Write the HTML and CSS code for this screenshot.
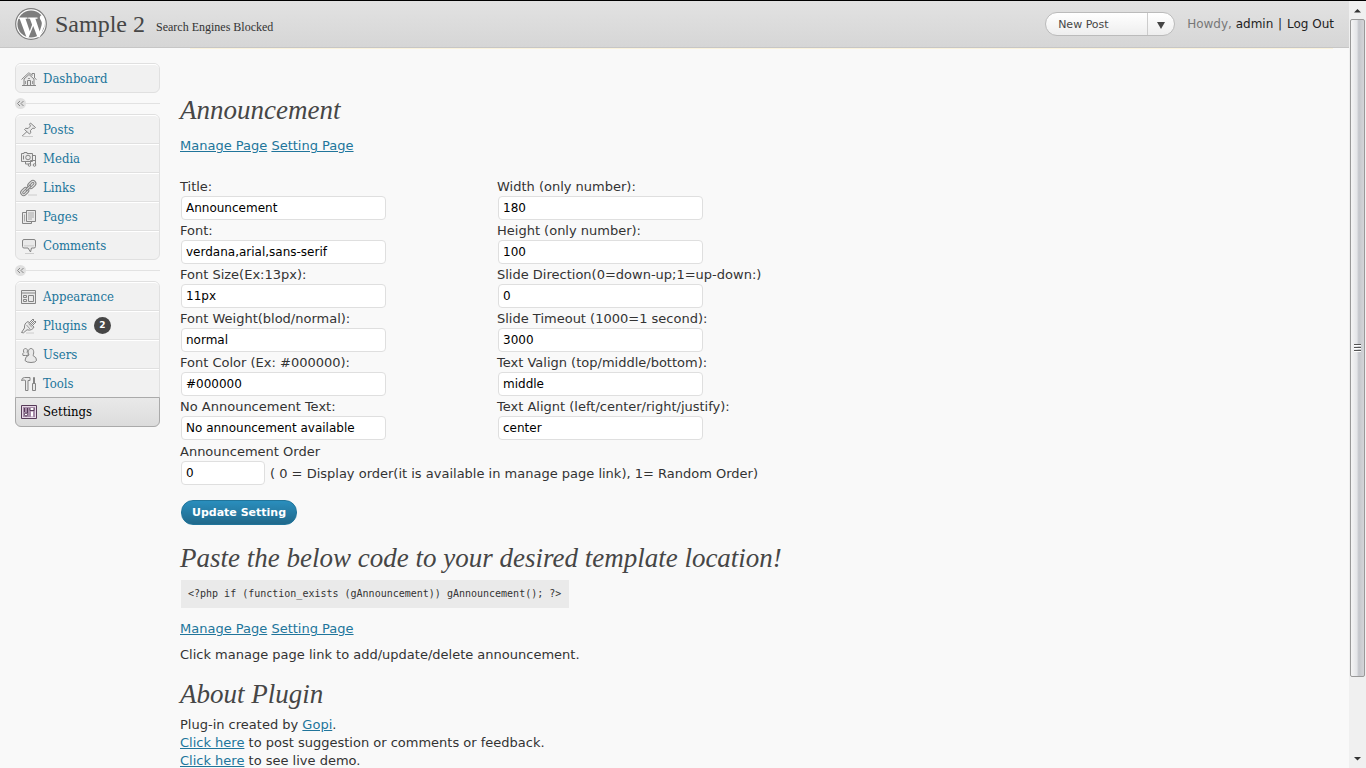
FILE: index.html
```html
<!DOCTYPE html>
<html lang="en">
<head>
<meta charset="utf-8">
<title>Announcement</title>
<link rel="stylesheet" href="styles.css">
</head>
<body>
<div class="page">
  <header class="top">
    <svg class="logo" viewBox="0 0 32 32" aria-hidden="true">
      <circle cx="16" cy="16" r="15.300" fill="#fff" stroke="#7d7d7d" stroke-width="1.200"/>
      <circle cx="16" cy="16" r="13.600" fill="#7d7d7d"/>
      <path fill="#fff" d="M3 9.500h9.500v1.300h-2l4.300 12.500 2.300-6.600-2.200-5.900h-1.700V9.500h9.300v1.300h-2.100l4.300 12.600 1.800-5.800c.9-3-.2-4.300-1.100-6-1.200-2.300-.3-4.300 1.900-4.300 1.800 2.200 2.800 5 2.600 8.300-.2 2.800-1.600 4.800-2.400 7l-2.800 6.700h-2.200l-4.300-11.300-4.500 11.300h-2.200L4.700 10.800H3z"/>
    </svg>
    <h1 class="site">Sample 2</h1>
    <a class="privacy" href="#">Search Engines Blocked</a>
    <div class="favorite">
      <button class="fav-main" type="button">New Post</button>
      <button class="fav-toggle" type="button" aria-label="More actions"><svg viewBox="0 0 8 7" width="8" height="7"><path d="M0 0h8L4 7z" fill="#444"/></svg></button>
    </div>
    <p class="user">Howdy, <a href="#">admin</a> <span>|</span> <a href="#">Log Out</a></p>
  </header>
  <div class="strip"></div>
  <div class="body">
    <nav class="menu" aria-label="Admin menu">
      <ul class="group">
        <li><a href="#"><svg class="icon" viewBox="0 0 16 16"><path class="fill" d="M3 8v6.500h10V8L8 3.500z"/><path d="M.5 8.500 7.500 2h1L11 4.500v-2h2.500V7l2 1.500M1 14.500h14M6.500 14.500v-5h3v5"/><path d="M7 7.500h2M4.500 10v3M11.500 10v3" stroke="#999"/></svg>Dashboard</a></li>
      </ul>
      <button class="fold" type="button" aria-label="Collapse menu"><svg viewBox="0 0 11 11"><circle cx="5.500" cy="5.500" r="5.500" fill="#e0e0e0"/><path d="M5 3 2.500 5.500 5 8M8.500 3 6 5.500 8.500 8" fill="none" stroke="#888"/></svg></button>
      <ul class="group">
        <li><a href="#"><svg class="icon" viewBox="0 0 16 16"><path d="M2 14.500h10" stroke="#ccc"/><path class="fill" d="m9.500 1 5 4.500-1.200 1-1.500-.4-2.300 2.400.2 2.300-1.200 1.200-5-4.500 1.200-1.200 2.400.2L9.500 4l-1-1.800z"/><path d="M6 9.500 1 14.200"/></svg>Posts</a></li>
        <li><a href="#"><svg class="icon" viewBox="0 0 16 16"><path class="fill" d="M.5 2.500H3v-1h3v1h5.500v8H.5z"/><circle class="fill" cx="7" cy="6.500" r="2.300"/><path d="M2.500 4.500v4M4.500 10.500v2.500h4M12 4.500h2.500v9M9.500 14V9.500h5"/><circle class="fill" cx="8.500" cy="14" r="1.300"/><circle class="fill" cx="13.500" cy="14" r="1.300"/></svg>Media</a></li>
        <li><a href="#"><svg class="icon" viewBox="0 0 16 16"><path d="M7 15h9" stroke="#ccc"/><g transform="rotate(-45 8 8)"><rect class="fill" x="-2" y="4.500" width="9" height="6" rx="3"/><rect class="fill" x="8" y="4.500" width="9" height="6" rx="3"/><rect x="0" y="6.500" width="5" height="2" rx="1"/><rect x="10" y="6.500" width="5" height="2" rx="1"/><path class="fill" d="M4.500 6.500h6v2h-6z"/></g></svg>Links</a></li>
        <li><a href="#"><svg class="icon" viewBox="0 0 16 16"><path class="fill" d="M5 3.500H1.500v11h9V13"/><path class="fill" d="M5.500 1.500h9v11h-9z"/><path d="M7 4h6M7 6h6M7 8h6M7 10h4M3.500 5.500v7" stroke="#aaa"/></svg>Pages</a></li>
        <li><a href="#"><svg class="icon" viewBox="0 0 16 16"><path d="M4 15.500h9" stroke="#ccc"/><path class="fill" d="M3 1.500h10q1.500 0 1.500 1.500v5.500Q14.500 10 13 10h-2.500l-1 4L7 10H3Q1.500 10 1.500 8.500V3q0-1.500 1.500-1.500z"/><path d="M3 7h10v1.500H3z" fill="#d4d4d4" stroke="none"/></svg>Comments</a></li>
      </ul>
      <button class="fold" type="button" aria-label="Collapse menu"><svg viewBox="0 0 11 11"><circle cx="5.500" cy="5.500" r="5.500" fill="#e0e0e0"/><path d="M5 3 2.500 5.500 5 8M8.500 3 6 5.500 8.500 8" fill="none" stroke="#888"/></svg></button>
      <ul class="group">
        <li><a href="#"><svg class="icon" viewBox="0 0 16 16"><path class="fill" d="M.5 1.500h14v13H.5z"/><path d="M1 4h13M2.500 6.500h3v2h-3zM2.500 10.500h3v2h-3zM7.500 6.500h5v6h-5z"/></svg>Appearance</a></li>
        <li><a href="#"><svg class="icon" viewBox="0 0 16 16"><path d="M5 15h8" stroke="#ccc"/><path d="m8 5 4-4 1 1-4 4M11 8l4-4-1-1-4 4"/><path class="fill" d="m7 3.500 6 5.500c-1 2.500-4 3.800-7 2.800l-3.500 3-2-.3 3-4.500C3 7 4.500 4.500 7 3.500z"/><path d="m5.500 7 3.500 4M7.500 5.500l3.500 4" stroke="#999"/></svg>Plugins<span class="count">2</span></a></li>
        <li><a href="#"><svg class="icon" viewBox="0 0 16 16"><path class="fill" d="M4.500 8.500H2q-1-2 .8-3C1.800 3 3 1.500 4.500 1.500S7 3 6.200 5.500q1.800 1 .8 3z"/><path class="fill" d="M8 8C6.500 5 7.500 1.500 10 1.500S13.500 5 12 8.500q4 2 3.500 5-1 2-5.500 2t-6-2q0-4 4-5.500z"/></svg>Users</a></li>
        <li><a href="#"><svg class="icon" viewBox="0 0 16 16"><path class="fill" d="M.5 4.500q.5-3 3-3H9v3H7v10H4.500v-10L3 4z"/><path class="fill" d="M12.500 1.500h1V7h-1zM11.500 7.500h3v7h-3z"/></svg>Tools</a></li>
        <li class="current"><a href="#"><svg class="icon" viewBox="0 0 16 16"><path d="M.5 1.500h15v13H.5z" fill="#e6d8e6" stroke="#563a58"/><path d="M2 3h12v10H2z" fill="#a68ba8" stroke="none"/><path d="M3.500 4v4M6.500 4v5" stroke="#563a58"/><circle cx="5" cy="10.500" r="1.500" fill="#fff" stroke="#563a58"/><path d="M11 7.500v5" stroke="#fff" stroke-width="2"/><path d="M9 4v2.500h4V4" fill="#fff" stroke="#563a58"/></svg>Settings</a></li>
      </ul>
    </nav>
    <main class="main">
      <h2>Announcement</h2>
      <p class="links"><a href="#">Manage Page</a> <a href="#">Setting Page</a></p>
      <form>
        <div class="fields">
          <div class="field"><label for="title">Title:</label><input id="title" type="text" value="Announcement"></div>
          <div class="field"><label for="width">Width (only number):</label><input id="width" type="text" value="180"></div>
          <div class="field"><label for="font">Font:</label><input id="font" type="text" value="verdana,arial,sans-serif"></div>
          <div class="field"><label for="height">Height (only number):</label><input id="height" type="text" value="100"></div>
          <div class="field"><label for="size">Font Size(Ex:13px):</label><input id="size" type="text" value="11px"></div>
          <div class="field"><label for="direction">Slide Direction(0=down-up;1=up-down:)</label><input id="direction" type="text" value="0"></div>
          <div class="field"><label for="weight">Font Weight(blod/normal):</label><input id="weight" type="text" value="normal"></div>
          <div class="field"><label for="timeout">Slide Timeout (1000=1 second):</label><input id="timeout" type="text" value="3000"></div>
          <div class="field"><label for="color">Font Color (Ex: #000000):</label><input id="color" type="text" value="#000000"></div>
          <div class="field"><label for="valign">Text Valign (top/middle/bottom):</label><input id="valign" type="text" value="middle"></div>
          <div class="field"><label for="empty">No Announcement Text:</label><input id="empty" type="text" value="No announcement available"></div>
          <div class="field"><label for="align">Text Alignt (left/center/right/justify):</label><input id="align" type="text" value="center"></div>
        </div>
        <div class="field order"><label for="order">Announcement Order</label><div class="inline"><input id="order" type="text" value="0"><span>( 0 = Display order(it is available in manage page link), 1= Random Order)</span></div></div>
        <button class="primary" type="submit">Update Setting</button>
      </form>
      <h2 class="paste">Paste the below code to your desired template location!</h2>
      <code>&lt;?php if (function_exists (gAnnouncement)) gAnnouncement(); ?&gt;</code>
      <p class="more"><a href="#">Manage Page</a> <a href="#">Setting Page</a></p>
      <p class="hint">Click manage page link to add/update/delete announcement.</p>
      <h2 class="about">About Plugin</h2>
      <p>Plug-in created by <a href="#">Gopi</a>.<br><a href="#">Click here</a> to post suggestion or comments or feedback.<br><a href="#">Click here</a> to see live demo.</p>
    </main>
  </div>
</div>
<div class="scrollbar" aria-hidden="true">
  <svg viewBox="0 0 17 18"><path d="M5 11.500h7L8.500 8z" fill="#333"/></svg>
  <div class="track"><div class="thumb"><i></i><i></i><i></i></div></div>
  <svg viewBox="0 0 17 18"><path d="M5 7h7l-3.500 3.500z" fill="#333"/></svg>
</div>
</body>
</html>
```

FILE: styles.css
```css
* { box-sizing: border-box; }
body {
  margin: 0;
  height: 100vh;
  display: flex;
  overflow: hidden;
  background: #f9f9f9;
  color: #333;
  font: 13px/18px Verdana, "DejaVu Sans", sans-serif;
}
.page { flex: 1; min-width: 0; overflow: hidden; }
h1, h2, p, ul { margin: 0; padding: 0; font-weight: normal; }
a { color: #21759b; }
button, input { font-family: inherit; }

.top {
  display: flex;
  align-items: center;
  height: 48px;
  padding: 0 15px;
  border-top: 1px solid #000;
  border-bottom: 1px solid #c6c6c6;
  background: linear-gradient(#e2e2e2, #d6d6d6);
}
.logo { width: 32px; height: 32px; }
.site { margin-left: 8px; font: 24px/32px Georgia, "Liberation Serif", serif; color: #464646; }
.privacy { margin: 6px 0 0 11px; font: 12px/16px Georgia, "Liberation Serif", serif; color: #333; text-decoration: none; }
.favorite {
  display: flex;
  width: 130px;
  height: 24px;
  margin-left: auto;
  border: 1px solid #bbb;
  border-radius: 12px;
  background: linear-gradient(#fff, #eee);
}
.favorite button { border: 0; background: none; color: #464646; }
.favorite .fav-main { flex: 1; padding: 0 0 0 12px; text-align: left; font-size: 11px; }
.favorite .fav-toggle { width: 27px; padding: 0; border-left: 1px solid #ccc; }
.user { margin-left: 12px; font-size: 12px; color: #777; }
.user a, .user span { color: #222; text-decoration: none; }
.user span { margin: 0 1px; }
.strip { height: 1px; margin: 0 16px 0 190px; background: #fbf3dc; }

.body { display: flex; gap: 20px; padding: 14px 15px 0; }
.menu { flex: 0 0 145px; }
.group { list-style: none; border: 1px solid #e0e0e0; border-radius: 6px; background: #f1f1f1; }
.group li { height: 29px; border-top: 1px solid #fff; border-bottom: 1px solid #e0e0e0; }
.group li:first-child { border-radius: 5px 5px 0 0; }
.group li:last-child { height: 28px; border-bottom: 0; }
.group a {
  display: flex;
  align-items: center;
  height: 27px;
  padding-left: 5px;
  font: 13px/18px Georgia, "DejaVu Serif Condensed", serif;
  text-decoration: none;
}
.icon { width: 16px; height: 16px; margin-right: 6px; overflow: visible; fill: none; stroke: #858585; }
.icon .fill { fill: #e9e9e9; }
.count {
  width: 17px;
  height: 17px;
  margin-left: 7px;
  border-radius: 9px;
  background: #464646;
  color: #fff;
  text-align: center;
  font: bold 9px/17px Verdana, "DejaVu Sans", sans-serif;
}
.group .current:last-child {
  height: 30px;
  margin: -1px;
  border: 1px solid #aaa;
  border-radius: 0 0 6px 6px;
  background: linear-gradient(#e9e9e9, #dcdcdc);
}
.group .current a { height: 28px; color: #000; }
.fold {
  display: flex;
  align-items: center;
  width: 100%;
  height: 20px;
  margin-bottom: 1px;
  padding: 0;
  border: 0;
  background: none;
}
.fold svg { width: 11px; height: 11px; }
.fold::after { content: ""; flex: 1; height: 1px; background: #e2e2e2; }

.main { flex: 1; min-width: 0; padding-top: 32px; }
h2 { font: italic 27px/30px Georgia, "Liberation Serif", serif; color: #464646; white-space: nowrap; }
.links { margin: 12px 0 21px; }
.fields { display: grid; grid-template-columns: 317px 1fr; }
.field label { display: block; padding-top: 1px; line-height: 19px; }
.field label { line-height: 20px; }
input {
  display: block;
  width: 205px;
  height: 24px;
  margin: -1px 0 0 1px;
  padding: 0 4px;
  border: 1px solid #dfdfdf;
  border-radius: 4px;
  background: #fff;
  color: #000;
  font-size: 12px;
}
.inline { display: flex; align-items: center; gap: 5px; }
.order { padding-top: 1px; }
.order input { width: 84px; }
.primary {
  display: block;
  height: 25px;
  margin: 15px 0 0 1px;
  padding: 0 10px;
  border: 1px solid #21759b;
  border-radius: 12px;
  background: linear-gradient(#2a8ebd, #21698b);
  color: #fff;
  font-size: 11px;
  font-weight: bold;
}
.paste { margin: 18px 0 7px; }
code {
  display: inline-block;
  margin-left: 1px;
  padding: 0 8px 0 7px;
  background: #eaeaea;
  font: 10px/28px Consolas, "DejaVu Sans Mono", monospace;
  vertical-align: top;
}
.more { margin-top: 12px; }
.hint { margin-top: 8px; }
.about { margin: 15px 0 7px; }

.scrollbar {
  display: flex;
  flex-direction: column;
  flex: 0 0 17px;
  border-top: 1px solid #000;
  background: #f0f0f0;
}
.scrollbar svg { height: 18px; }
.track { flex: 1; padding: 0 1px; }
.thumb {
  display: flex;
  flex-direction: column;
  justify-content: center;
  align-items: center;
  gap: 1px;
  height: 90%;
  border: 1px solid #999;
  border-radius: 2px;
  background: linear-gradient(to right, #f5f5f5, #e4e5e8 45%, #c4c6cb 60%, #d4d5d8);
}
.thumb i { width: 7px; height: 2px; border-top: 1px solid #555; background: #fff; }
```
